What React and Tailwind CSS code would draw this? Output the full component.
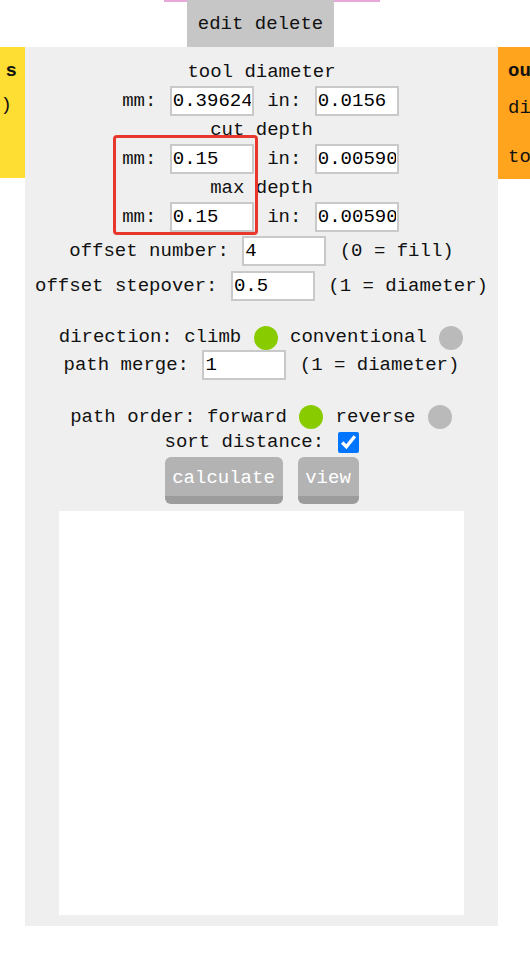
import React from "react";

const MONO = "font-['Liberation_Mono',monospace]";

function Field({ value }) {
  return (
    <input
      readOnly
      value={value}
      className="mx-[2px] h-[30px] w-[84px] shrink-0 border-2 border-[#c9c9c9] bg-white px-[1px] text-[19px] leading-none text-black outline-none font-['Liberation_Mono',monospace]"
    />
  );
}

function Dot({ on }) {
  return (
    <span
      className={
        on
          ? "mx-[1px] inline-block h-[24px] w-[24px] shrink-0 rounded-full bg-[#88cc00]"
          : "mx-[1px] inline-block h-[24px] w-[24px] shrink-0 rounded-full bg-[#bababa]"
      }
    />
  );
}

function Row({ className, children }) {
  return (
    <div className={"flex items-center justify-center whitespace-pre " + className}>
      {children}
    </div>
  );
}

export default function App() {
  return (
    <div className={"relative h-[958px] w-[530px] overflow-hidden bg-white text-[19px] text-[#111] " + MONO}>
      {/* pink module edge above */}
      <div className="absolute left-[164px] top-0 h-[2px] w-[216px] bg-[#e9a6d8]" />

      {/* edit / delete bar */}
      <div className="absolute left-[187px] top-0 flex h-[47px] w-[147px] items-center justify-center bg-[#c6c6c6] pt-[1px]">
        edit delete
      </div>

      {/* left yellow module (only its right edge is visible) */}
      <div className="absolute left-0 top-[47px] flex h-[131px] w-[25px] flex-col items-end bg-[#ffde33] pt-[10px]">
        <div className="h-[28px] pr-[8px] font-bold leading-[28px]">s</div>
        <div className="mt-[6px] h-[28px] pr-[13px] leading-[28px]">)</div>
      </div>

      {/* right orange module (clipped by the window) */}
      <div className="absolute left-[498px] top-[47px] flex h-[132px] w-[220px] flex-col bg-[#ffa41c] pl-[10px] pt-[10px]">
        <div className="h-[28px] font-bold leading-[28px]">outputs</div>
        <div className="mt-[9px] h-[28px] leading-[28px]">diameter</div>
        <div className="mt-[21px] h-[28px] leading-[28px]">toolpath</div>
      </div>

      {/* main module */}
      <div className="absolute left-[25px] top-[47px] flex h-[879px] w-[473px] flex-col items-center bg-[#efefef] pt-[11px]">
        <Row className="h-[28px]">tool diameter</Row>
        <Row className="h-[30px]">
          <span>{"mm: "}</span>
          <Field value="0.39624" />
          <span>{" in: "}</span>
          <Field value="0.0156" />
        </Row>
        <Row className="h-[28px]">cut depth</Row>
        <Row className="h-[30px]">
          <span>{"mm: "}</span>
          <Field value="0.15" />
          <span>{" in: "}</span>
          <Field value="0.00590" />
        </Row>
        <Row className="h-[28px]">max depth</Row>
        <Row className="h-[30px]">
          <span>{"mm: "}</span>
          <Field value="0.15" />
          <span>{" in: "}</span>
          <Field value="0.00590" />
        </Row>
        <Row className="mt-[4px] h-[30px]">
          <span>{"offset number: "}</span>
          <Field value="4" />
          <span>{" (0 = fill)"}</span>
        </Row>
        <Row className="mt-[5px] h-[30px]">
          <span>{"offset stepover: "}</span>
          <Field value="0.5" />
          <span>{" (1 = diameter)"}</span>
        </Row>
        <Row className="mt-[25px] h-[23px]">
          <span>{"direction: climb "}</span>
          <Dot on />
          <span>{" conventional "}</span>
          <Dot />
        </Row>
        <Row className="mt-[1px] h-[30px]">
          <span>{"path merge: "}</span>
          <Field value="1" />
          <span>{" (1 = diameter)"}</span>
        </Row>
        <Row className="mt-[25px] h-[24px]">
          <span>{"path order: forward "}</span>
          <Dot on />
          <span>{" reverse "}</span>
          <Dot />
        </Row>
        <Row className="h-[24px] pt-[2px]">
          <span>{"sort distance: "}</span>
          <input
            type="checkbox"
            checked
            readOnly
            className="m-0 ml-[2px] h-[21px] w-[21px] accent-[#0075ff]"
          />
        </Row>
        <div className="mt-[4px] flex h-[47px] justify-center gap-[15px]">
          <div className="flex h-[47px] w-[118px] items-center justify-center rounded-[6px] border-b-[8px] border-[#9c9c9c] bg-[#b3b3b3] pt-[4px] text-white">
            calculate
          </div>
          <div className="flex h-[47px] w-[61px] items-center justify-center rounded-[6px] border-b-[8px] border-[#9c9c9c] bg-[#b3b3b3] pt-[4px] text-white">
            view
          </div>
        </div>
        <div className="mt-[7px] h-[404px] w-[405px] bg-white" />
      </div>

      {/* red annotation box */}
      <div className="absolute left-[113px] top-[135px] h-[100px] w-[145px] rounded-[4px] border-[3px] border-[#e8372c]" />
    </div>
  );
}
